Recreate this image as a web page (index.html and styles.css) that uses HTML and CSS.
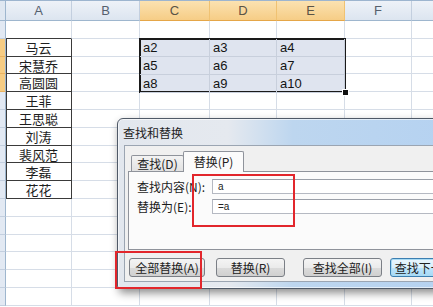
FILE: index.html
```html
<!DOCTYPE html>
<html lang="zh">
<head>
<meta charset="utf-8">
<title>查找和替换</title>
<link rel="stylesheet" href="styles.css">
</head>
<body>
<div class="sheet">
  <div class="rh hd"></div><div class="ch">A</div><div class="ch">B</div><div class="ch on">C</div><div class="ch on">D</div><div class="ch on">E</div><div class="ch">F</div><div class="ch"></div>

  <div class="sel">
    <span class="s">a2</span><span class="s">a3</span><span class="s">a4</span>
    <span class="s">a5</span><span class="s">a6</span><span class="s">a7</span>
    <span class="s">a8</span><span class="s">a9</span><span class="s">a10</span>
    <span class="handle"></span>
  </div>

  <div class="rh"></div><div class="c nb"></div><div class="c"></div><div class="c"></div><div class="c"></div><div class="c"></div><div class="c"></div><div class="c"></div>
  <div class="rh on"></div><div class="c nm">马云</div><div class="c"></div><div class="c"></div><div class="c"></div>
  <div class="rh on"></div><div class="c nm">宋慧乔</div><div class="c"></div><div class="c"></div><div class="c"></div>
  <div class="rh on"></div><div class="c nm">高圆圆</div><div class="c"></div><div class="c"></div><div class="c"></div>
  <div class="rh"></div><div class="c nm">王菲</div><div class="c"></div><div class="c"></div><div class="c"></div><div class="c"></div><div class="c"></div><div class="c"></div>
  <div class="rh"></div><div class="c nm">王思聪</div><div class="c"></div><div class="c"></div><div class="c"></div><div class="c"></div><div class="c"></div><div class="c"></div>
  <div class="rh"></div><div class="c nm">刘涛</div><div class="c"></div><div class="c"></div><div class="c"></div><div class="c"></div><div class="c"></div><div class="c"></div>
  <div class="rh"></div><div class="c nm">裴风范</div><div class="c"></div><div class="c"></div><div class="c"></div><div class="c"></div><div class="c"></div><div class="c"></div>
  <div class="rh"></div><div class="c nm">李磊</div><div class="c"></div><div class="c"></div><div class="c"></div><div class="c"></div><div class="c"></div><div class="c"></div>
  <div class="rh"></div><div class="c nm">花花</div><div class="c"></div><div class="c"></div><div class="c"></div><div class="c"></div><div class="c"></div><div class="c"></div>
  <div class="rh"></div><div class="c"></div><div class="c"></div><div class="c"></div><div class="c"></div><div class="c"></div><div class="c"></div><div class="c"></div>
  <div class="rh"></div><div class="c"></div><div class="c"></div><div class="c"></div><div class="c"></div><div class="c"></div><div class="c"></div><div class="c"></div>
  <div class="rh"></div><div class="c"></div><div class="c"></div><div class="c"></div><div class="c"></div><div class="c"></div><div class="c"></div><div class="c"></div>
  <div class="rh"></div><div class="c"></div><div class="c"></div><div class="c"></div><div class="c"></div><div class="c"></div><div class="c"></div><div class="c"></div>
  <div class="rh"></div><div class="c"></div><div class="c"></div><div class="c"></div><div class="c"></div><div class="c"></div><div class="c"></div><div class="c"></div>
  <div class="rh"></div><div class="c"></div><div class="c"></div><div class="c"></div><div class="c"></div><div class="c"></div><div class="c"></div><div class="c"></div>
</div>

<div class="dlg">
  <div class="title">查找和替换</div>
  <div class="body">
    <div class="tabs">
      <div class="tab">查找(<u>D</u>)</div>
      <div class="tab act">替换(<u>P</u>)</div>
    </div>
    <div class="panel">
      <div class="frow"><span class="lbl">查找内容(<u>N</u>):</span><span class="inp">a</span></div>
      <div class="frow"><span class="lbl">替换为(<u>E</u>):</span><span class="inp">=a</span></div>
    </div>
    <div class="btns">
      <span class="btn b1">全部替换(<u>A</u>)</span>
      <span class="btn b2">替换(<u>R</u>)</span>
      <span class="btn b3">查找全部(<u>I</u>)</span>
      <span class="btn b4 def">查找下一个(<u>F</u>)</span>
    </div>
  </div>
</div>

<div class="mark m1"></div>
<div class="mark m2"></div>
</body>
</html>
```

FILE: styles.css
```css
html, body {
  margin: 0;
  padding: 0;
  width: 433px;
  height: 307px;
  overflow: hidden;
  background: #fff;
}

.sheet {
  display: grid;
  grid-template-columns: 6px 66px 68px 70px 67px 68px 67px 80px;
  grid-template-rows: 20px repeat(16, 17.8px);
  font-family: "Liberation Sans", Arial, sans-serif;
  border-top: 1px solid #9db5cf;
}

.ch {
  box-sizing: border-box;
  background: linear-gradient(#eef2f8, #dce5f0);
  border-right: 1px solid #c3cfdf;
  border-bottom: 1px solid #9eb6ce;
  color: #55606e;
  font-size: 13px;
  line-height: 19px;
  text-align: center;
}
.ch.on {
  background: linear-gradient(#fbe2b1, #f6cd86);
  border-right-color: #f0c272;
  border-bottom-color: #e5a648;
  color: #5a5346;
}
.rh {
  box-sizing: border-box;
  background: #e2e9f3;
  border-right: 1px solid #9eb6ce;
  border-bottom: 1px solid #c3cfdf;
}
.rh.hd { background: #dfe7f1; border-bottom-color: #9eb6ce; }
.rh.on { background: #f6cc83; border-bottom-color: #e9b261; }

.c {
  box-sizing: border-box;
  border-right: 1px solid #d6dde7;
  border-bottom: 1px solid #d6dde7;
}
.c.nb { border-bottom-color: #3a3a3a; }
.c.nm {
  border-right-color: #3a3a3a;
  border-bottom-color: #3a3a3a;
  box-shadow: inset 1px 0 0 #3a3a3a;
  font-family: "Noto Sans CJK SC", sans-serif;
  font-size: 13px;
  line-height: 17px;
  text-align: center;
  color: #1e1e1e;
}

.sel {
  grid-column: 4 / 7;
  grid-row: 3 / 6;
  position: relative;
  z-index: 1;
  display: grid;
  grid-template-columns: 70px 67px 68px;
  grid-template-rows: repeat(3, 1fr);
  background: #dfe4ef;
  box-shadow: 0 0 0 1px #1a1a1a, inset 0 0 0 1px #1a1a1a;
}
.s {
  box-sizing: border-box;
  border-right: 1px solid #c8cfdc;
  border-bottom: 1px solid #c8cfdc;
  font-size: 13px;
  line-height: 17px;
  padding-left: 3px;
  color: #141414;
}
.handle {
  position: absolute;
  right: -4px;
  bottom: -4px;
  width: 5px;
  height: 5px;
  background: #111;
  border: 1px solid #fff;
}

/* dialog */
.dlg {
  position: absolute;
  left: 117px;
  top: 118px;
  width: 340px;
  height: 171px;
  box-sizing: border-box;
  border: 1px solid #4f5967;
  border-radius: 6px 6px 3px 3px;
  padding: 0 6px 6px 6px;
  background: linear-gradient(to right, #e2e7ee 0, #e5e9ef 110px, #bdd6ef 175px, #b5d2f1 100%);
  box-shadow: 2px 4px 8px rgba(0, 0, 0, 0.45), inset 0 0 0 1px rgba(255,255,255,0.6);
  display: flex;
  flex-direction: column;
  font-family: "Noto Sans CJK SC", sans-serif;
  font-size: 12px;
  color: #1b1b1b;
}
.dlg u { text-decoration: none; }
.title {
  height: 26px;
  line-height: 27px;
  margin-left: -1px;
  color: #222;
}
.body {
  flex: 1;
  background: #f0f0f0;
  border: 1px solid #9ba5b2;
  padding: 5px 0 0 3px;
  display: flex;
  flex-direction: column;
}
.tabs {
  display: flex;
  align-items: flex-end;
  padding-left: 3px;
  height: 20px;
}
.tab {
  box-sizing: border-box;
  width: 53px;
  height: 16px;
  border: 1px solid #8f939b;
  border-bottom: none;
  border-radius: 2px 2px 0 0;
  background: linear-gradient(#f3f3f3, #e2e2e2);
  text-align: center;
  line-height: 15px;
  color: #222;
}
.tab.act {
  width: 61px;
  height: 21px;
  margin-left: -1px;
  margin-bottom: -1px;
  background: #fbfbfb;
  line-height: 20px;
  position: relative;
  z-index: 1;
}
.panel {
  box-sizing: border-box;
  height: 79px;
  border: 1px solid #8f939b;
  background: #fbfbfb;
  padding: 7px 0 0 8px;
  display: flex;
  flex-direction: column;
  gap: 5px;
}
.frow {
  display: flex;
  align-items: center;
  height: 15px;
}
.lbl {
  width: 75px;
  flex: none;
  line-height: 15px;
}
.inp {
  box-sizing: border-box;
  flex: 1;
  height: 15px;
  background: #fff;
  border: 1px solid #b5b9c2;
  border-top-color: #9a9fa8;
  font-family: "Liberation Sans", sans-serif;
  font-size: 10px;
  line-height: 13px;
  padding-left: 5px;
  color: #222;
}
.btns {
  display: flex;
  margin-top: 8px;
  padding-left: 0;
}
.btn {
  box-sizing: border-box;
  height: 19px;
  border: 1px solid #7b7f86;
  border-radius: 3px;
  background: linear-gradient(#f4f4f4 0, #ebebeb 50%, #dbdbdb 51%, #d0d0d0 100%);
  text-align: center;
  line-height: 17px;
  color: #222;
  flex: none;
}
.b1 { width: 76px; margin-left: 1px; }
.b2 { width: 69px; margin-left: 11px; }
.b3 { width: 79px; margin-left: 18px; }
.b4 { width: 84px; margin-left: 8px; }
.btn.def {
  border-color: #3c7fb1;
  box-shadow: inset 0 0 0 1px #a8dbf4;
  background: linear-gradient(#eaf6fd 0, #d9f0fc 50%, #bee6fd 51%, #a7d9f5 100%);
}

.mark {
  position: absolute;
  box-sizing: border-box;
  border: 2px solid #e2262c;
  z-index: 3;
}
.m1 { left: 192px; top: 174px; width: 103px; height: 53px; }
.m2 { left: 115px; top: 251px; width: 87px; height: 38px; }
```
